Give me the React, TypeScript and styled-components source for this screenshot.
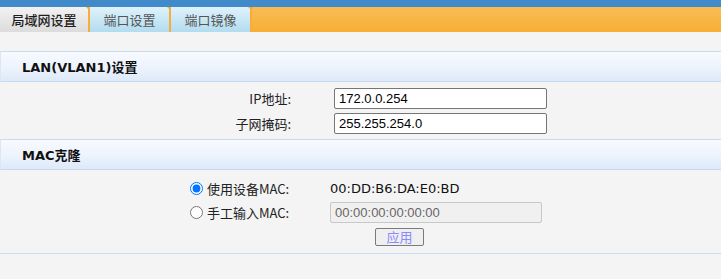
import React from 'react';
import styled, { createGlobalStyle } from 'styled-components';

const GlobalStyle = createGlobalStyle`
    html, body {
        margin: 0;
        padding: 0;
        background: #f4f4f4;
        font-family: 'DejaVu Sans', 'Noto Sans CJK SC', sans-serif;
        font-size: 13px;
        color: #222;
    }
`;

const tabs = ['局域网设置', '端口设置', '端口镜像'];

const App = () => {
    return (
        <>
            <GlobalStyle />
            <Page>
                <TopStrip />
                <TabBar>
                    {tabs.map((t, i) => (
                        <Tab key={t} $active={i === 0} $width={i === 0 ? 90 : 81}>
                            {t}
                        </Tab>
                    ))}
                </TabBar>
                <Content>
                    <SectionHeader>LAN(VLAN1)设置</SectionHeader>
                    <SectionBody $pad="4px 0 3px">
                        <FieldRow $labelWidth={294} $gap={40}>
                            <Label>IP地址:</Label>
                            <TextInput defaultValue="172.0.0.254" />
                        </FieldRow>
                        <FieldRow $labelWidth={294} $gap={40}>
                            <Label>子网掩码:</Label>
                            <TextInput defaultValue="255.255.254.0" />
                        </FieldRow>
                    </SectionBody>
                    <SectionHeader>MAC克隆</SectionHeader>
                    <SectionBody $pad="6px 0 3px" $bordered>
                        <RadioRow>
                            <RadioLabel>
                                <Radio type="radio" name="mac" defaultChecked />
                                使用设备MAC:
                            </RadioLabel>
                            <MacValue>00:DD:B6:DA:E0:BD</MacValue>
                        </RadioRow>
                        <RadioRow>
                            <RadioLabel>
                                <Radio type="radio" name="mac" />
                                手工输入MAC:
                            </RadioLabel>
                            <TextInput $disabled disabled defaultValue="00:00:00:00:00:00" />
                        </RadioRow>
                        <ButtonRow>
                            <ApplyButton disabled>应用</ApplyButton>
                        </ButtonRow>
                    </SectionBody>
                </Content>
            </Page>
        </>
    );
};

export default App;

const Page = styled.div`
    width: 100%;
    min-height: 279px;
    background: #f4f4f4;
`;

const TopStrip = styled.div`
    height: 7px;
    background: #418bcb;
`;

const TabBar = styled.div`
    height: 25px;
    display: flex;
    background: linear-gradient(to bottom, #f9bc55 0%, #f8b749 40%, #f7ae36 100%);
`;

const Tab = styled.div<{ $active?: boolean; $width: number }>`
    position: relative;
    width: ${(p) => p.$width}px;
    height: 25px;
    box-sizing: border-box;
    border-right: 2px solid #f6ad3a;
    display: flex;
    align-items: center;
    justify-content: center;
    font-family: 'Noto Sans CJK SC', sans-serif;
    font-size: 13px;
    color: ${(p) => (p.$active ? '#1d1d1d' : '#555')};
    font-weight: ${(p) => (p.$active ? 500 : 400)};
    background: ${(p) =>
        p.$active
            ? 'linear-gradient(to bottom, #f2f2f2, #dcdcdc)'
            : 'linear-gradient(to bottom, #e0f2fb, #b2dcef)'};
    &::after {
        content: '';
        position: absolute;
        top: 0;
        right: -4px;
        border-left: 3px solid transparent;
        border-right: 3px solid transparent;
        border-top: 3px solid #f6ad3a;
    }
`;

const Content = styled.div`
    margin-top: 19px;
`;

const SectionHeader = styled.div`
    height: 29px;
    box-sizing: content-box;
    border-top: 1px solid #cbdcef;
    border-bottom: 1px solid #c6d9ee;
    border-left: 1px solid #dbe7f5;
    padding-left: 21px;
    display: flex;
    align-items: center;
    font-weight: bold;
    font-size: 13px;
    color: #111;
    background: linear-gradient(to bottom, #f7faff 0%, #eef4fd 50%, #dde9f9 100%);
`;

const SectionBody = styled.div<{ $pad: string; $bordered?: boolean }>`
    padding: ${(p) => p.$pad};
    border-bottom: ${(p) => (p.$bordered ? '1px solid #c7ddf4' : 'none')};
`;

const FieldRow = styled.div<{ $labelWidth: number; $gap: number }>`
    display: grid;
    grid-template-columns: ${(p) => p.$labelWidth}px 1fr;
    column-gap: ${(p) => p.$gap}px;
    align-items: center;
    height: 25px;
`;

const Label = styled.div`
    text-align: right;
    padding-right: 3px;
    font-family: 'Noto Sans CJK SC', sans-serif;
    font-size: 13px;
    color: #222;
`;

const TextInput = styled.input<{ $disabled?: boolean }>`
    width: 213px;
    height: 21px;
    box-sizing: border-box;
    padding: 0 4px;
    font-family: 'Liberation Sans', Arial, sans-serif;
    font-size: 13px;
    color: ${(p) => (p.$disabled ? '#666' : '#000')};
    background: ${(p) => (p.$disabled ? '#f0f0f0' : '#fff')};
    border: 1px solid ${(p) => (p.$disabled ? '#c8c8c8' : '#767676')};
    border-radius: 2px;
    outline: none;
    ${(p) => (p.$disabled ? 'width: 212px;' : '')}
`;

const RadioRow = styled.div`
    display: grid;
    grid-template-columns: 330px 1fr;
    align-items: center;
    height: 24px;
`;

const RadioLabel = styled.label`
    display: flex;
    align-items: center;
    padding-left: 190px;
    font-family: 'Noto Sans CJK SC', sans-serif;
    font-size: 13px;
    color: #222;
`;

const Radio = styled.input`
    width: 13px;
    height: 13px;
    margin: 0 4px 0 0;
    accent-color: #0075ff;
`;

const MacValue = styled.div`
    font-family: 'DejaVu Sans', sans-serif;
    font-size: 13px;
    color: #111;
`;

const ButtonRow = styled.div`
    height: 26px;
    display: flex;
    align-items: center;
    padding-left: 375px;
`;

const ApplyButton = styled.button`
    width: 49px;
    height: 18px;
    padding: 0;
    font-family: 'Noto Sans CJK SC', sans-serif;
    font-size: 13px;
    line-height: 16px;
    color: #8a8aff;
    background: #efefef;
    border: 1px solid #7a7a7a;
    border-radius: 2px;
`;
